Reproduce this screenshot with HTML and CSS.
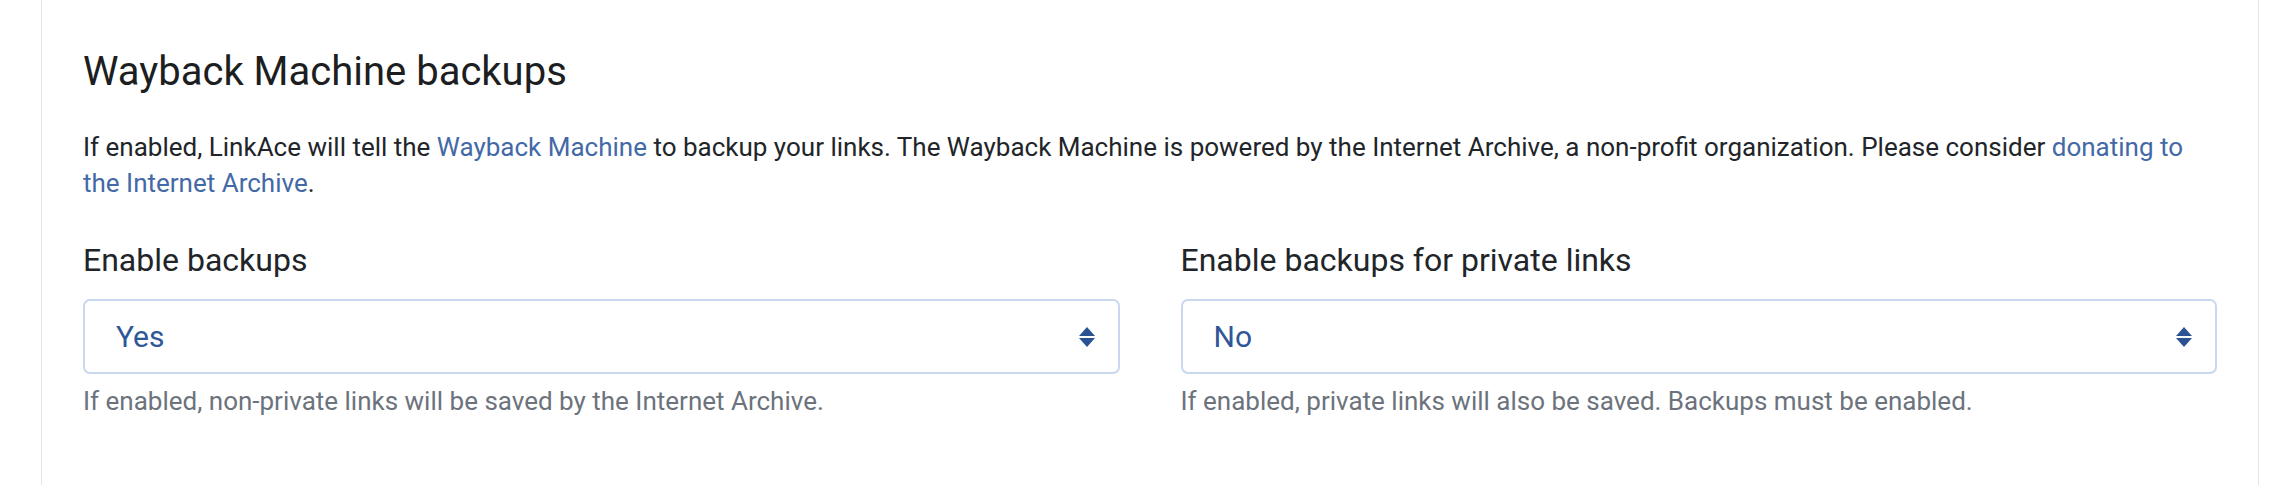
FILE: index.html
```html
<!DOCTYPE html>
<html lang="en">
<head>
<meta charset="utf-8">
<title>Wayback Machine backups</title>
<link rel="stylesheet" href="styles.css">
</head>
<body>
<main class="page">
  <section class="card">
    <h3 class="card-title">Wayback Machine backups</h3>
    <p class="card-text">If enabled, LinkAce will tell the <a href="#" class="link">Wayback Machine</a> to backup your links. The Wayback Machine is powered by the Internet Archive, a non-profit organization. Please consider <a href="#" class="link">donating to the Internet Archive</a>.</p>
    <div class="form-row">
      <div class="form-group">
        <label class="form-label" for="archive_backups_enabled">Enable backups</label>
        <div class="select-wrap">
          <select class="form-select" id="archive_backups_enabled">
            <option selected>Yes</option>
            <option>No</option>
          </select>
          <svg class="select-arrow" viewBox="0 0 16 20" width="16" height="20" aria-hidden="true">
            <path d="M8 0 L16 9 L0 9 Z"/>
            <path d="M0 11 L16 11 L8 20 Z"/>
          </svg>
        </div>
        <p class="form-text">If enabled, non-private links will be saved by the Internet Archive.</p>
      </div>
      <div class="form-group">
        <label class="form-label" for="archive_private_backups_enabled">Enable backups for private links</label>
        <div class="select-wrap">
          <select class="form-select" id="archive_private_backups_enabled">
            <option>Yes</option>
            <option selected>No</option>
          </select>
          <svg class="select-arrow" viewBox="0 0 16 20" width="16" height="20" aria-hidden="true">
            <path d="M8 0 L16 9 L0 9 Z"/>
            <path d="M0 11 L16 11 L8 20 Z"/>
          </svg>
        </div>
        <p class="form-text">If enabled, private links will also be saved. Backups must be enabled.</p>
      </div>
    </div>
  </section>
</main>
</body>
</html>
```
FILE: styles.css
```css
* { box-sizing: border-box; }

html, body {
  margin: 0;
  padding: 0;
  background: #ffffff;
}

body {
  font-family: Roboto, "Noto Sans", sans-serif;
  color: #212529;
  overflow: hidden;
}

.page {
  padding: 0 31px 0 41px;
}

.card {
  width: 2218px;
  border: 1px solid #e3e3e3;
  border-top: 0;
  padding: 48px 41px 80px 41px;
  background: #ffffff;
}

.card-title {
  margin: 0 0 33px 0;
  font-size: 40px;
  line-height: 48px;
  font-weight: 400;
  color: #1c1e21;
}

.card-text {
  margin: 0 0 35px 0;
  font-size: 26px;
  line-height: 36px;
  color: #212529;
}

.link {
  color: #4369a6;
  text-decoration: none;
}

.form-row {
  display: grid;
  grid-template-columns: 1fr 1fr;
  column-gap: 61px;
}

.form-group {
  display: flex;
  flex-direction: column;
}

.form-label {
  display: block;
  margin-bottom: 15px;
  font-size: 32px;
  line-height: 48px;
  color: #212529;
}

.select-wrap {
  position: relative;
}

.form-select {
  display: block;
  width: 100%;
  height: 75px;
  margin: 0;
  padding: 0 60px 0 31px;
  font-family: Roboto, "Noto Sans", sans-serif;
  font-size: 30px;
  line-height: 36px;
  color: #2f5798;
  background: #ffffff;
  border: 2px solid #c9d8ef;
  border-radius: 7px;
  -webkit-appearance: none;
  appearance: none;
  outline: none;
}

.select-arrow {
  position: absolute;
  right: 25px;
  top: 28px;
  fill: #2b5393;
  pointer-events: none;
}

.form-text {
  margin: 8px 0 0 0;
  font-size: 26px;
  line-height: 39px;
  color: #6c737c;
}
```
